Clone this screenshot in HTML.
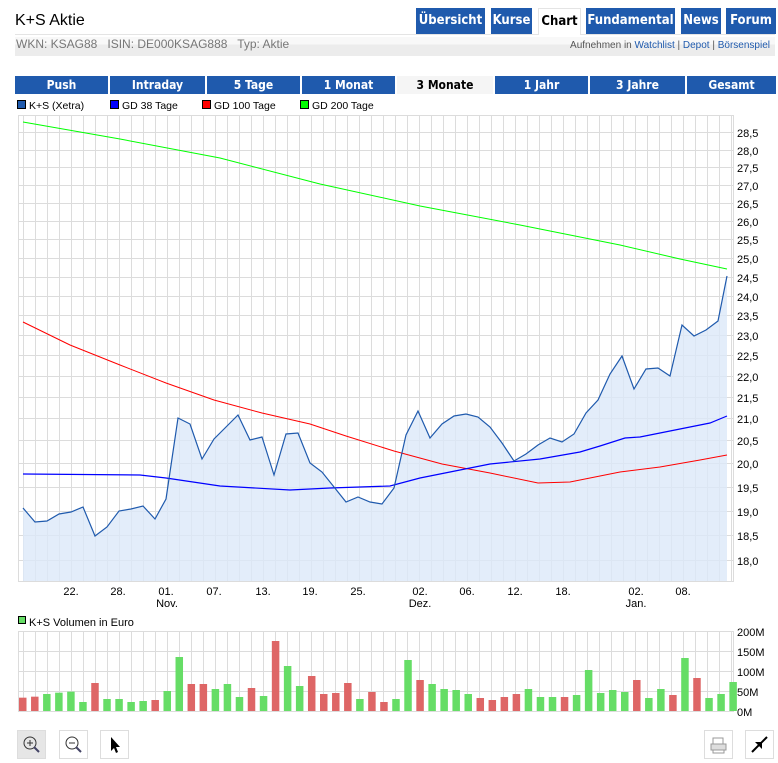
<!DOCTYPE html>
<html><head><meta charset="utf-8">
<style>
body{margin:0;background:#fff;width:778px;height:761px;overflow:hidden;font-family:"Liberation Sans",sans-serif;position:relative}
.a{position:absolute}
.nav{position:absolute;top:8px;height:26px;background:#1f5aad;color:#fff;font-weight:bold;font-size:13px;line-height:26px;text-align:center;font-family:"DejaVu Sans Condensed","Liberation Sans",sans-serif}
.pt{position:absolute;top:76px;height:18px;background:#1f5aad;color:#fff;font-weight:bold;font-size:12px;line-height:18px;text-align:center;font-family:"DejaVu Sans Condensed","Liberation Sans",sans-serif}
.btn{position:absolute;top:730px;width:29px;height:29px;border:1px solid #ddd;box-sizing:border-box;background:#fff}
.lg{position:absolute;top:100px;font-size:10.5px;color:#000;white-space:nowrap}
.lg i{display:inline-block;width:7px;height:7px;border:1px solid #000;margin-right:3px}
</style></head><body>
<div class="a" style="left:15px;top:12px;font-size:16px;color:#000">K+S Aktie</div>
<div class="a" style="left:15px;top:34px;width:760px;height:1px;background:#e4e4e4"></div>
<div class="nav" style="left:416px;width:69px">Übersicht</div>
<div class="nav" style="left:491px;width:41px">Kurse</div>
<div class="nav" style="left:538px;width:43px;top:8px;background:#fff;color:#000;border:1px solid #e4e4e4;border-bottom:none;box-sizing:border-box;height:27px">Chart</div>
<div class="nav" style="left:586px;width:89px">Fundamental</div>
<div class="nav" style="left:681px;width:40px">News</div>
<div class="nav" style="left:726px;width:50px">Forum</div>
<div class="a" style="left:15px;top:37px;width:760px;height:19px;background:linear-gradient(#f8f8f8 0,#f8f8f8 40%,#ececec 40%)"></div>
<div class="a" style="left:16px;top:37px;font-size:12px;color:#777">WKN: KSAG88&nbsp;&nbsp; ISIN: DE000KSAG888&nbsp;&nbsp; Typ: Aktie</div>
<div class="a" style="right:8px;top:40px;font-size:10px;color:#555">Aufnehmen in <span style="color:#1f5aad">Watchlist</span> | <span style="color:#1f5aad">Depot</span> | <span style="color:#1f5aad">Börsenspiel</span></div>
<div class="pt" style="left:15px;width:93px">Push</div>
<div class="pt" style="left:110px;width:95px">Intraday</div>
<div class="pt" style="left:207px;width:93px">5 Tage</div>
<div class="pt" style="left:302px;width:93px">1 Monat</div>
<div class="pt" style="left:397px;width:96px;background:#f5f5f5;color:#000">3 Monate</div>
<div class="pt" style="left:495px;width:93px">1 Jahr</div>
<div class="pt" style="left:590px;width:95px">3 Jahre</div>
<div class="pt" style="left:687px;width:89px">Gesamt</div>
<div class="lg" style="left:17px"><i style="background:#1f5aad"></i>K+S (Xetra)</div>
<div class="lg" style="left:110px"><i style="background:#0000ff"></i>GD 38 Tage</div>
<div class="lg" style="left:202px"><i style="background:#ff0000"></i>GD 100 Tage</div>
<div class="lg" style="left:300px"><i style="background:#00ff00"></i>GD 200 Tage</div>
<svg class="a" style="left:0;top:0" width="778" height="761">
<g id="vg" stroke="#dcdcdc" stroke-width="1"></g>
<rect x="18.5" y="115.5" width="715" height="466" fill="none" stroke="#dcdcdc"/>
<g stroke="#dcdcdc">
<line x1="18" x2="733" y1="132.5" y2="132.5"/><line x1="18" x2="733" y1="150.5" y2="150.5"/><line x1="18" x2="733" y1="167.5" y2="167.5"/><line x1="18" x2="733" y1="185.5" y2="185.5"/><line x1="18" x2="733" y1="203.5" y2="203.5"/><line x1="18" x2="733" y1="221.5" y2="221.5"/><line x1="18" x2="733" y1="239.5" y2="239.5"/><line x1="18" x2="733" y1="258.5" y2="258.5"/><line x1="18" x2="733" y1="277.5" y2="277.5"/><line x1="18" x2="733" y1="296.5" y2="296.5"/><line x1="18" x2="733" y1="315.5" y2="315.5"/><line x1="18" x2="733" y1="335.5" y2="335.5"/><line x1="18" x2="733" y1="355.5" y2="355.5"/><line x1="18" x2="733" y1="376.5" y2="376.5"/><line x1="18" x2="733" y1="397.5" y2="397.5"/><line x1="18" x2="733" y1="418.5" y2="418.5"/><line x1="18" x2="733" y1="440.5" y2="440.5"/><line x1="18" x2="733" y1="463.5" y2="463.5"/><line x1="18" x2="733" y1="487.5" y2="487.5"/><line x1="18" x2="733" y1="511.5" y2="511.5"/><line x1="18" x2="733" y1="535.5" y2="535.5"/><line x1="18" x2="733" y1="560.5" y2="560.5"/>
</g>
<polygon fill="#dce8f9" fill-opacity="0.8" points="23,581 23,508 35,522 47,521 59,514 71,512 83,507 95,536 107,527 119,511 131,509 143,506 155,519 166,499 178,418 190,424 202,459 214,439 226,427 238,415 250,440 262,437 274,475 286,434 298,433 310,463 322,472 334,487 346,502 358,497 370,502 382,504 394,488 406,435 418,411 430,438 442,424 454,416 466,414 478,417 490,427 502,443 514,461 526,454 538,445 550,438 562,442 574,434 586,413 598,400 610,374 622,356 634,389 646,369 658,368 670,376 682,325 694,336 706,330 718,321 727,276 727,581"/>
<polyline fill="none" stroke="#00ff00" stroke-width="1" points="23,122 120,139 220,158 320,184 420,206 520,225 620,245 680,259 727,269"/>
<polyline fill="none" stroke="#ff0000" stroke-width="1" points="23,322 70,345 120,365 166,383 214,400 262,413 310,424 346,436 394,451 442,464 490,473 538,483 570,482 590,478 620,472 660,467 700,460 727,455"/>
<polyline fill="none" stroke="#0000ff" stroke-width="1.2" points="23,474 140,475 166,478 220,486 290,490 330,488 390,486 420,478 460,470 490,464 540,459 580,452 600,446 625,438 640,437 660,433 690,427 710,423 727,416"/>
<polyline fill="none" stroke="#1f5aad" stroke-width="1.2" points="23,508 35,522 47,521 59,514 71,512 83,507 95,536 107,527 119,511 131,509 143,506 155,519 166,499 178,418 190,424 202,459 214,439 226,427 238,415 250,440 262,437 274,475 286,434 298,433 310,463 322,472 334,487 346,502 358,497 370,502 382,504 394,488 406,435 418,411 430,438 442,424 454,416 466,414 478,417 490,427 502,443 514,461 526,454 538,445 550,438 562,442 574,434 586,413 598,400 610,374 622,356 634,389 646,369 658,368 670,376 682,325 694,336 706,330 718,321 727,276"/>
<g font-family="Liberation Sans, sans-serif" font-size="11" fill="#000">
<text x="737" y="137">28,5</text><text x="737" y="155">28,0</text><text x="737" y="172">27,5</text><text x="737" y="190">27,0</text><text x="737" y="208">26,5</text><text x="737" y="226">26,0</text><text x="737" y="244">25,5</text><text x="737" y="263">25,0</text><text x="737" y="282">24,5</text><text x="737" y="301">24,0</text><text x="737" y="320">23,5</text><text x="737" y="340">23,0</text><text x="737" y="360">22,5</text><text x="737" y="381">22,0</text><text x="737" y="402">21,5</text><text x="737" y="423">21,0</text><text x="737" y="445">20,5</text><text x="737" y="468">20,0</text><text x="737" y="492">19,5</text><text x="737" y="516">19,0</text><text x="737" y="540">18,5</text><text x="737" y="565">18,0</text>
<g text-anchor="middle">
<text x="71" y="595">22.</text><text x="118" y="595">28.</text><text x="166" y="595">01.</text><text x="214" y="595">07.</text><text x="263" y="595">13.</text><text x="310" y="595">19.</text><text x="358" y="595">25.</text><text x="420" y="595">02.</text><text x="467" y="595">06.</text><text x="515" y="595">12.</text><text x="563" y="595">18.</text><text x="636" y="595">02.</text><text x="683" y="595">08.</text>
<text x="167" y="607">Nov.</text><text x="420" y="607">Dez.</text><text x="636" y="607">Jan.</text>
</g>
<text x="29" y="626">K+S Volumen in Euro</text>
<text x="737" y="636">200M</text><text x="737" y="656">150M</text><text x="737" y="676">100M</text><text x="737" y="696">50M</text><text x="737" y="716">0M</text>
</g>
<rect x="18.5" y="616.5" width="7" height="7" fill="#66dd66" stroke="#000"/>
<g id="vv" stroke="#dcdcdc"></g>
<rect x="18.5" y="631.5" width="715" height="80" fill="none" stroke="#dcdcdc"/>
<g stroke="#dcdcdc"><line x1="18" x2="733" y1="651.5" y2="651.5"/><line x1="18" x2="733" y1="671.5" y2="671.5"/><line x1="18" x2="733" y1="691.5" y2="691.5"/></g>
<g id="bars"></g>
</svg>
<div class="btn" style="left:17px;background:#e6e6e6"><svg width="27" height="27"><circle cx="12" cy="12" r="6" fill="none" stroke="#333"/><line x1="9" y1="12" x2="15" y2="12" stroke="#333"/><line x1="12" y1="9" x2="12" y2="15" stroke="#333"/><line x1="16" y1="16" x2="21" y2="21" stroke="#446" stroke-width="2"/></svg></div>
<div class="btn" style="left:59px"><svg width="27" height="27"><circle cx="12" cy="12" r="6" fill="none" stroke="#333"/><line x1="9" y1="12" x2="15" y2="12" stroke="#333"/><line x1="16" y1="16" x2="21" y2="21" stroke="#446" stroke-width="2"/></svg></div>
<div class="btn" style="left:100px"><svg width="27" height="27"><path d="M10 6 L10 20 L13 17 L15 22 L17 21 L15 16 L19 16 Z" fill="#000"/></svg></div>
<div class="btn" style="left:704px"><svg width="27" height="27"><rect x="8" y="7" width="10" height="6" fill="none" stroke="#999"/><rect x="6" y="13" width="15" height="6" fill="#ddd" stroke="#999"/><rect x="8" y="19" width="11" height="3" fill="#fff" stroke="#999"/></svg></div>
<div class="btn" style="left:745px"><svg width="27" height="27"><line x1="6" y1="21" x2="21" y2="6" stroke="#000" stroke-width="2"/><path d="M9 11 L16 11 L16 18 Z" fill="#000"/></svg></div>
<script>
var ns="http://www.w3.org/2000/svg";
function L(g,x1,y1,x2,y2){var l=document.createElementNS(ns,"line");l.setAttribute("x1",x1);l.setAttribute("y1",y1);l.setAttribute("x2",x2);l.setAttribute("y2",y2);g.appendChild(l);}
var vg=document.getElementById("vg"),vv=document.getElementById("vv");
for(var x=23.5;x<733;x+=12){L(vg,x,115,x,581);L(vv,x,631,x,711);}
var tops=[413,410,402,398,395,426,369,417,417,426,423,420,393,291,372,372,387,372,411,384,408,243,318,378,348,402,399,369,417,396,426,417,300,360,372,387,390,402,414,420,411,402,387,411,411,411,405,330,399,390,396,360,414,387,405,294,354,414,402,366];
var col="rrggggrggggrggrrgggrgrggrrrrgrrggrggggrrrrgggrgggggrggrgrggg";
var b=document.getElementById("bars");
for(var i=0;i<60;i++){var r=document.createElementNS(ns,"rect");var t=560+tops[i]/3;r.setAttribute("x",19+i*12.04);r.setAttribute("y",t);r.setAttribute("width",7.5);r.setAttribute("height",711-t);r.setAttribute("fill",col[i]=="r"?"#de6666":"#66dd66");b.appendChild(r);}
</script>
</body></html>
